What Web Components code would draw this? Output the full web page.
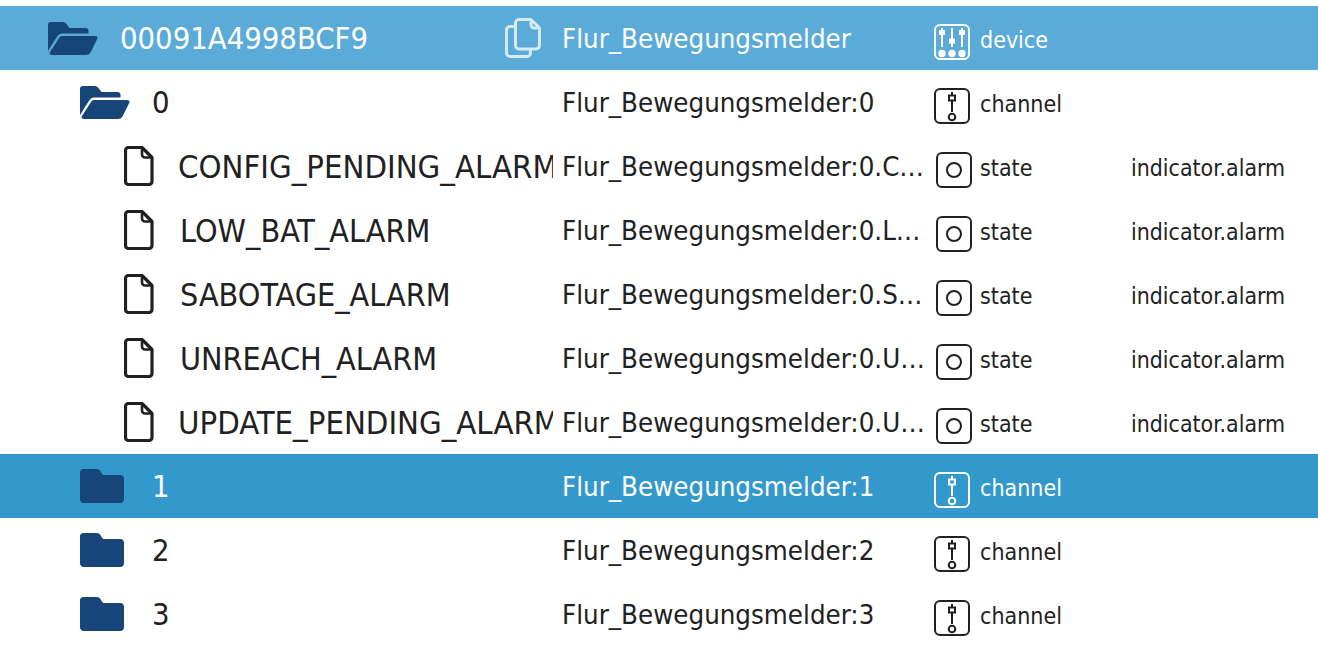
<!DOCTYPE html>
<html>
<head>
<meta charset="utf-8">
<title>Objects</title>
<style>
    html, body { margin: 0; background: #fff; }
    body { font-family: "DejaVu Sans", "Liberation Sans", sans-serif; font-stretch: condensed; color: #212121; }
</style>
</head>
<body>
<object-tree>
    <tree-row level="0" variant="device">
        <tree-icon slot="icon" kind="folder-open"></tree-icon>
        <span slot="name">00091A4998BCF9</span>
        <tree-icon slot="action" kind="copy"></tree-icon>
        <span slot="id">Flur_Bewegungsmelder</span>
        <type-icon slot="type-icon" kind="device"></type-icon>
        <span slot="type">device</span>
    </tree-row>
    <tree-row level="1">
        <tree-icon slot="icon" kind="folder-open"></tree-icon>
        <span slot="name">0</span>
        <span slot="id">Flur_Bewegungsmelder:0</span>
        <type-icon slot="type-icon" kind="channel"></type-icon>
        <span slot="type">channel</span>
    </tree-row>
    <tree-row level="2" long>
        <tree-icon slot="icon" kind="file"></tree-icon>
        <span slot="name">CONFIG_PENDING_ALARM</span>
        <span slot="id">Flur_Bewegungsmelder:0.C…</span>
        <type-icon slot="type-icon" kind="state"></type-icon>
        <span slot="type">state</span>
        <span slot="role">indicator.alarm</span>
    </tree-row>
    <tree-row level="2">
        <tree-icon slot="icon" kind="file"></tree-icon>
        <span slot="name">LOW_BAT_ALARM</span>
        <span slot="id">Flur_Bewegungsmelder:0.L…</span>
        <type-icon slot="type-icon" kind="state"></type-icon>
        <span slot="type">state</span>
        <span slot="role">indicator.alarm</span>
    </tree-row>
    <tree-row level="2">
        <tree-icon slot="icon" kind="file"></tree-icon>
        <span slot="name">SABOTAGE_ALARM</span>
        <span slot="id">Flur_Bewegungsmelder:0.S…</span>
        <type-icon slot="type-icon" kind="state"></type-icon>
        <span slot="type">state</span>
        <span slot="role">indicator.alarm</span>
    </tree-row>
    <tree-row level="2">
        <tree-icon slot="icon" kind="file"></tree-icon>
        <span slot="name">UNREACH_ALARM</span>
        <span slot="id">Flur_Bewegungsmelder:0.U…</span>
        <type-icon slot="type-icon" kind="state"></type-icon>
        <span slot="type">state</span>
        <span slot="role">indicator.alarm</span>
    </tree-row>
    <tree-row level="2" long>
        <tree-icon slot="icon" kind="file"></tree-icon>
        <span slot="name">UPDATE_PENDING_ALARM</span>
        <span slot="id">Flur_Bewegungsmelder:0.U…</span>
        <type-icon slot="type-icon" kind="state"></type-icon>
        <span slot="type">state</span>
        <span slot="role">indicator.alarm</span>
    </tree-row>
    <tree-row level="1" variant="selected">
        <tree-icon slot="icon" kind="folder"></tree-icon>
        <span slot="name">1</span>
        <span slot="id">Flur_Bewegungsmelder:1</span>
        <type-icon slot="type-icon" kind="channel"></type-icon>
        <span slot="type">channel</span>
    </tree-row>
    <tree-row level="1">
        <tree-icon slot="icon" kind="folder"></tree-icon>
        <span slot="name">2</span>
        <span slot="id">Flur_Bewegungsmelder:2</span>
        <type-icon slot="type-icon" kind="channel"></type-icon>
        <span slot="type">channel</span>
    </tree-row>
    <tree-row level="1">
        <tree-icon slot="icon" kind="folder"></tree-icon>
        <span slot="name">3</span>
        <span slot="id">Flur_Bewegungsmelder:3</span>
        <type-icon slot="type-icon" kind="channel"></type-icon>
        <span slot="type">channel</span>
    </tree-row>
</object-tree>

<script>
const treeIcons = {
    'folder-open': `<svg width="50" height="33" viewBox="0 0 50 33" fill="#17457a">
        <path d="M0 3a3 3 0 0 1 3-3H15q2 0 3 1.500L21.500 6H37.500a3 3 0 0 1 3 3v2.500H14q-3 0-4.500 2.500L0 29Z"/>
        <path d="M14 14H47q3.500 0 2.300 2.800L42.500 30.500Q41 33 38 33H4q-3.500 0-2-3L11 16q1-2 3-2Z"/></svg>`,
    // same box as the open folder, so the labels line up
    'folder': `<svg width="50" height="34" viewBox="0 0 50 34" fill="#17457a">
        <path d="M3.500 0H17q2 0 3 1.500L23 6H40a4 4 0 0 1 4 4V30a4 4 0 0 1-4 4H4a4 4 0 0 1-4-4V3.500A3.500 3.500 0 0 1 3.500 0Z"/></svg>`,
    'file': `<svg width="30" height="40" viewBox="0 0 30 40" fill="none" stroke="#212121" stroke-width="3.200" stroke-linejoin="round">
        <path d="M4.500 1.500H18L28 11.500V35.500a3 3 0 0 1-3 3H4.500a3 3 0 0 1-3-3V4.500a3 3 0 0 1 3-3Z"/>
        <path d="M18 1.500V8.500a3 3 0 0 0 3 3H28" stroke-width="2.600"/></svg>`,
    'copy': `<svg width="36" height="40" viewBox="0 0 36 40" fill="none" stroke="#d6eaf6" stroke-width="3" stroke-linejoin="round">
        <path d="M10 8.500H5a3.500 3.500 0 0 0-3.500 3.500V35a3.500 3.500 0 0 0 3.500 3.500H22a3.500 3.500 0 0 0 3.500-3.500V31"/>
        <path d="M14 1.500H26L34.500 10V27.500a3.500 3.500 0 0 1-3.500 3.500H14a3.500 3.500 0 0 1-3.500-3.500V5a3.500 3.500 0 0 1 3.500-3.500Z"/>
        <path d="M26 1.500V7a3 3 0 0 0 3 3H34.500"/></svg>`
};

const typeIcons = {
    device: `<path d="M8 4V23M18 4V23M28 4V23"/>
        <path d="M5 8.500H11M15 17H21M25 8.500H31" stroke-width="5"/>
        <g fill="currentColor" stroke="none"><circle cx="8" cy="29.500" r="3.700"/><circle cx="18" cy="29.500" r="3.700"/><circle cx="28" cy="29.500" r="3.700"/></g>`,
    channel: `<path d="M18 4V7.500M18 12.500V24"/><rect x="15" y="7.500" width="6" height="5"/><circle cx="18" cy="29" r="3.300"/>`,
    state: `<circle cx="18" cy="18" r="7"/>`
};

class ObjectTree extends HTMLElement {
    constructor() {
        super();
        this.attachShadow({ mode: 'open' });
        this.shadowRoot.innerHTML = `
            <style>
                :host { display: flex; flex-direction: column; padding-top: 6px; }
            </style>
            <slot></slot>
        `;
    };
};

class TreeIcon extends HTMLElement {
    constructor() {
        super();
        this.attachShadow({ mode: 'open' });
        this.shadowRoot.innerHTML = `
            <style>
                :host { display: flex; flex: none; }
                svg { display: block; }
            </style>
            ${treeIcons[this.getAttribute('kind')]}
        `;
    };
};

class TypeIcon extends HTMLElement {
    constructor() {
        super();
        this.attachShadow({ mode: 'open' });
        const kind = this.getAttribute('kind');
        // the state boxes sit 2px further right than the others
        this.shadowRoot.innerHTML = `
            <style>
                :host { display: flex; flex: none; margin-top: 8px; margin-left: ${kind === 'state' ? 2 : 0}px; margin-right: ${kind === 'state' ? 8 : 10}px; }
                svg { display: block; }
            </style>
            <svg width="36" height="36" viewBox="0 0 36 36" fill="none" stroke="currentColor" stroke-width="2">
                <rect x="1" y="1" width="34" height="34" rx="5"/>
                ${typeIcons[kind]}
            </svg>
        `;
    };
};

const treeRow = document.createElement('template');
treeRow.innerHTML = `
    <style>
        :host {
            display: grid;
            grid-template-columns: 553px 381px 197px 1fr;
            height: 64px;
            align-items: center;
            color: #212121;
            white-space: nowrap;
        }
        :host([variant="device"]) { background: #5aabd8; color: #fff; }
        :host([variant="selected"]) { background: #3398cc; color: #fff; }
        :host([level="0"]) .name { padding-left: 48px; }
        :host([level="1"]) .name { padding-left: 80px; }
        :host([level="2"]) .name { padding-left: 124px; }
        .name, .type { display: flex; align-items: center; min-width: 0; }
        .name { font-size: 30.700px; }
        :host([level="2"]) .name { font-size: 32px; }
        :host([long]) .name { font-size: 32.600px; }
        .label { flex: 1; min-width: 0; overflow: hidden; margin-left: 22px; }
        :host([level="2"]) .label { margin-left: 26px; padding-top: 1px; }
        :host([long]) .label { margin-left: 24px; }
        :host([level="0"]) .action { display: flex; margin-right: 12px; }
        .id { font-size: 27.400px; padding: 0 9px; overflow: hidden; text-overflow: ellipsis; }
        .type-label, .role { font-size: 23px; padding-top: 4px; }
        .role { font-size: 22.900px; }
    </style>
    <div class="name">
        <slot name="icon"></slot>
        <div class="label"><slot name="name"></slot></div>
        <div class="action"><slot name="action"></slot></div>
    </div>
    <div class="id"><slot name="id"></slot></div>
    <div class="type"><slot name="type-icon"></slot><div class="type-label"><slot name="type"></slot></div></div>
    <div class="role"><slot name="role"></slot></div>
`;

class TreeRow extends HTMLElement {
    constructor() {
        super();
        this.attachShadow({ mode: 'open' });
        this.shadowRoot.appendChild(treeRow.content.cloneNode(true));
    };
};

window.customElements.define('object-tree', ObjectTree);
window.customElements.define('tree-icon', TreeIcon);
window.customElements.define('type-icon', TypeIcon);
window.customElements.define('tree-row', TreeRow);
</script>
</body>
</html>
